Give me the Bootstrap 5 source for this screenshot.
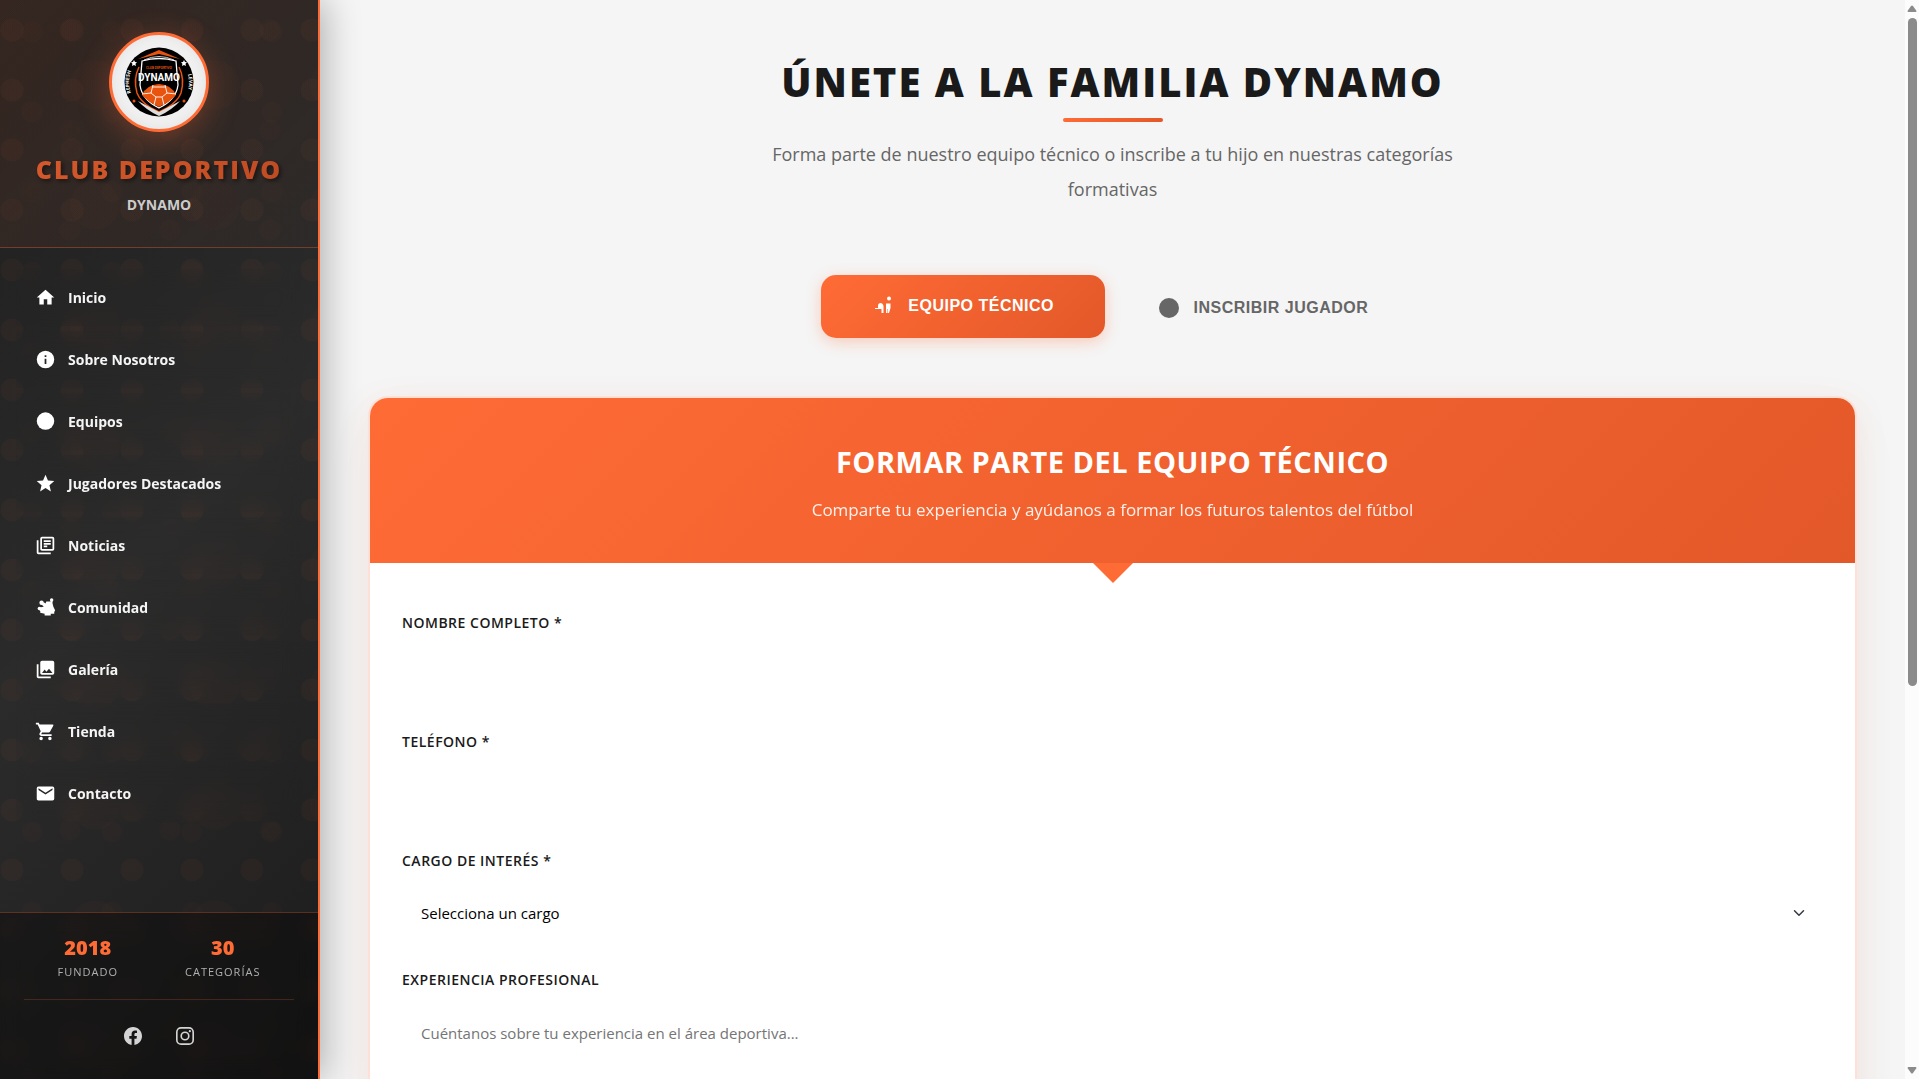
<!DOCTYPE html>
<html lang="es">
<head>
<meta charset="utf-8">
<meta name="viewport" content="width=device-width, initial-scale=1">
<title>Club Deportivo Dynamo</title>
<link href="https://cdn.jsdelivr.net/npm/bootstrap@5.3.0/dist/css/bootstrap.min.css" rel="stylesheet">
<style>
:root { --club: #ff6b35; --club-dark: #e55a2b; --club-grad: linear-gradient(135deg, #ff6b35, #e35829); }
body { font-family: "Open Sans", "Noto Sans", sans-serif; background: #f5f5f5; color: #1a1a1a; }
.app-side {
  width: 320px; z-index: 2; border-right: 2px solid var(--club);
  box-shadow: 4px 0 34px rgba(0,0,0,.3);
  background:
    radial-gradient(circle at 12px 30px, rgba(255,107,53,.035) 11px, transparent 12px) 0 0/60px 60px,
    radial-gradient(circle at 32px 32px, rgba(255,107,53,.02) 10px, transparent 11px) 0 0/80px 80px,
    radial-gradient(circle at 70px 30px, rgba(255,107,53,.02) 10px, transparent 11px) 0 0/100px 100px,
    radial-gradient(circle at 95px 85px, rgba(255,107,53,.02) 24px, transparent 25px) 0 0/120px 120px,
    linear-gradient(135deg, #1e1e1e 0%, #2b2b2b 50%, #1c1c1c 100%);
}
.side-head { padding: 32px 24px; height: 248px; border-bottom: 1px solid rgba(255,107,53,.3); background: linear-gradient(135deg, rgba(255,107,53,.1), rgba(255,107,53,.02)); }
.crest { width: 100px; height: 100px; border: 3px solid var(--club); background: #f0f0f0; box-shadow: 0 8px 32px rgba(255,107,53,.3), inset 0 0 12px rgba(0,0,0,.06); }
.crest svg { overflow: visible; }
.club-name { font-size: 25px; font-weight: 800; line-height: 36px; letter-spacing: 2px; margin-top: 19px; background: var(--club-grad); -webkit-background-clip: text; background-clip: text; color: transparent; filter: drop-shadow(2px 2px 2px rgba(0,0,0,.5)) brightness(.84); }
.club-sub { font-size: 14px; font-weight: 700; line-height: 24px; color: #ccc; margin-top: 6px; }
.side-nav { padding: 21px 16px 0; gap: 5px; }
.side-nav .nav-link { display: flex; align-items: center; gap: 12px; height: 57px; padding: 0 19px 1px; font-size: 14px; font-weight: 700; color: #f5f5f5; backdrop-filter: blur(10px); }
.side-nav svg { width: 21px; height: 21px; fill: #fff; }
.side-foot { height: 167px; padding: 16px 24px; border-top: 1px solid rgba(255,107,53,.3); background: rgba(0,0,0,.35); backdrop-filter: blur(10px); }
.stats { height: 71px; border-bottom: 1px solid rgba(255,107,53,.2); padding: 5px 0; }
.stat-num { font-size: 20px; line-height: 28px; font-weight: 800; color: var(--club); }
.stat-tag { font-size: 11px; line-height: 20px; font-weight: 500; color: #b0b0b0; letter-spacing: 1px; }
.social { gap: 34px; padding-top: 27px; }
.social svg { width: 18px; height: 18px; fill: #d4d4d4; display: block; }
.app-main { padding: 48px; min-width: 0; overflow: hidden; }
.page-title { font-size: 40px; line-height: 64px; font-weight: 800; letter-spacing: 2px; padding-top: 2px; margin: 0; }
.title-rule { width: 100px; height: 4px; border-radius: 2px; background: var(--club-grad); margin: 4px auto 0; }
.page-sub { max-width: 700px; font-size: 18px; line-height: 35px; color: #666; margin: 15px auto 0; }
.tabs { display: grid; grid-template-columns: 1fr 1fr; gap: 16px; width: max-content; margin: 70px auto 0; }
.tab-btn { height: 63px; padding: 0 36px 2px; border: 0; border-radius: 15px; background: none; color: #666; font: bold 16px/24px "Liberation Sans", Arial, sans-serif; letter-spacing: .5px; display: flex; align-items: center; justify-content: center; gap: 13px; }
.tab-btn svg { width: 24px; height: 24px; fill: currentColor; }
.tab-btn.active { background: var(--club-grad); color: #fff; transform: translateY(-2px); box-shadow: 0 4px 15px rgba(255,107,53,.3); }
.form-panel { margin-top: 56px; border: 2px solid #ffe0d6; border-radius: 20px; background: #fff; box-shadow: 0 20px 60px rgba(0,0,0,.03), 0 8px 32px rgba(255,107,53,.1); }
.panel-head { position: relative; height: 165px; padding-top: 40px; border-radius: 18px 18px 0 0; background: var(--club-grad); color: #fff; }
.panel-head::after { content: ""; position: absolute; top: 100%; left: 50%; margin-left: -20px; border: 20px solid transparent; border-top-color: var(--club); border-bottom: 0; }
.panel-head h2 { font-size: 29px; line-height: 48px; font-weight: 700; letter-spacing: .5px; margin: 0; }
.panel-head p { font-size: 17px; line-height: 28px; margin: 10px 0 0; opacity: .9; }
.panel-body { padding: 48px 32px; }
.field { margin-bottom: 29px; }
.field label { display: block; font-size: 14px; line-height: 24px; font-weight: 600; letter-spacing: .5px; color: #1a1a1a; margin-bottom: 13px; }
.field .form-control, .field .form-select { height: 53px; border: 0; padding: 0 19px; font-size: 15px; line-height: 24px; color: #000; background-color: transparent; }
.field .form-select { background-position: right 18px center; background-size: 12px; }
.field textarea.form-control { height: 120px; padding-top: 16px; resize: none; }
.field ::placeholder { color: #757575; }
.scroll-col { width: 14px; background: #fcfcfc; padding: 5px 0; }
.scroll-col i { width: 9px; height: 668px; border-radius: 5px; background: #8b8b8b; margin-top: 5px; }
.scroll-col svg { width: 10px; height: 8px; fill: #8b8b8b; }
</style>
</head>
<body>
<div class="d-flex vh-100 overflow-hidden">
  <aside class="app-side d-flex flex-column flex-shrink-0">
    <header class="side-head text-center">
      <div class="crest rounded-circle mx-auto d-flex align-items-center justify-content-center">
        <svg width="70" height="70" viewBox="0 0 70 70" role="img" aria-label="Escudo Dynamo">
          <defs><path id="arcL" d="M14 56A29 29 0 0 1 14 14"/><path id="arcR" d="M56 14A29 29 0 0 1 56 56"/></defs>
          <circle cx="35" cy="35" r="34.500"/>
          <path d="M14 12L35 3L56 12L35 7Z" fill="#e8530e"/>
          <path d="M20 13Q35 6 50 13" fill="none" stroke="#fff" stroke-width=".8"/>
          <path d="M15 20Q9 32 13 46Q16 54 27 61L35 65" fill="none" stroke="#e8530e" stroke-width="1.500"/>
          <path d="M55 20Q61 32 57 46Q54 54 43 61L35 65" fill="none" stroke="#e8530e" stroke-width="1.500"/>
          <path d="M18 14Q35 9 52 14L54 38Q52 53 35 61Q18 53 16 38Z" stroke="#fff" stroke-width="1.300"/>
          <path d="M14 54Q22 63 35 69Q48 63 56 54L35 65Z" fill="#ddd"/>
          <path d="M18 48Q22 38 35 37Q48 38 52 48Q46 55 35 60Q24 55 18 48Z" fill="#e8530e"/>
          <path d="M29 38L27 46L32 50L38 50L43 46L41 38M27 46L18 47M43 46L52 47M32 50L30 58M38 50L40 58M28 40H42" fill="none" stroke="#fff" stroke-width=".9"/>
          <text x="35" y="22" font-size="3" font-weight="700" text-anchor="middle" fill="#e8530e">CLUB DEPORTIVO</text>
          <text x="35" y="34" font-family="Roboto" font-size="10" font-weight="700" text-anchor="middle" fill="#fff">DYNAMO</text>
          <g font-size="5" font-weight="700" text-anchor="middle" fill="#fff"><text><textPath href="#arcL" startOffset="50%">REPHESH</textPath></text><text><textPath href="#arcR" startOffset="50%">LEVAY</textPath></text></g>
          <path d="M10 13l1 2 2 .3-1.500 1.400.4 2.200L10 18l-2 .9.400-2.200L7 15.300 9 15zM60 13l1 2 2 .3-1.500 1.400.4 2.200L60 18l-2 .9.400-2.200L57 15.300 59 15z" fill="#fff"/>
          <circle cx="10" cy="54" r="1.500" fill="#e8530e"/><circle cx="60" cy="54" r="1.500" fill="#e8530e"/>
        </svg>
      </div>
      <h1 class="club-name mb-0 text-nowrap">CLUB DEPORTIVO</h1>
      <p class="club-sub mb-0">DYNAMO</p>
    </header>
    <nav class="side-nav nav flex-column flex-nowrap">
      <a class="nav-link" href="#"><svg viewBox="0 0 24 24"><path d="M10 20v-6h4v6h5v-8h3L12 3 2 12h3v8z"/></svg>Inicio</a>
      <a class="nav-link" href="#"><svg viewBox="0 0 24 24"><path d="M12 2a10 10 0 1 0 0 20 10 10 0 0 0 0-20zm1 15h-2v-6h2zm0-8h-2V7h2z"/></svg>Sobre Nosotros</a>
      <a class="nav-link" href="#"><svg viewBox="0 0 24 24"><circle cx="12" cy="11.500" r="10"/></svg>Equipos</a>
      <a class="nav-link" href="#"><svg viewBox="0 0 24 24"><path d="M12 17.270L18.180 21l-1.640-7.030L22 9.240l-7.190-.61L12 2 9.190 8.630 2 9.240l5.460 4.730L5.820 21z"/></svg>Jugadores Destacados</a>
      <a class="nav-link" href="#"><svg viewBox="0 0 24 24"><path d="M4 6H2v14c0 1.100.9 2 2 2h14v-2H4zM20 2H8a2 2 0 0 0-2 2v12c0 1.100.9 2 2 2h12a2 2 0 0 0 2-2V4a2 2 0 0 0-2-2zm0 14H8V4h12zM10 9h8v2h-8zm0 3h4v2h-4zm0-6h8v2h-8z"/></svg>Noticias</a>
      <a class="nav-link" href="#"><svg viewBox="0 0 24 24"><circle cx="19" cy="3.500" r="2"/><circle cx="7.500" cy="6.500" r="2.500"/><circle cx="5" cy="13" r="2"/><path d="M5 12l5-1-3-3 3-2 2 1.500L13 5h5l2 2 1 4 2 4-1 2v2h-4v2h-7v-2l-5-1v-2l-2-2zM18 4h2v4h-2z"/></svg>Comunidad</a>
      <a class="nav-link" href="#"><svg viewBox="0 0 24 24"><path d="M22 16V4a2 2 0 0 0-2-2H8a2 2 0 0 0-2 2v12c0 1.100.9 2 2 2h12a2 2 0 0 0 2-2zm-11-4l2.030 2.710L16 11l4 5H8zM2 6v14c0 1.100.9 2 2 2h14v-2H4V6z"/></svg>Galería</a>
      <a class="nav-link" href="#"><svg viewBox="0 0 24 24"><path d="M7 18a2 2 0 1 0 0 4 2 2 0 0 0 0-4zM1 2v2h2l3.600 7.590-1.350 2.450C4.520 15.370 5.480 17 7 17h12v-2H7.420a.25.25 0 0 1-.25-.25l.93-1.750h7.450c.75 0 1.410-.41 1.750-1.030l3.580-6.490A1 1 0 0 0 20 4H5.210l-.94-2zm16 16a2 2 0 1 0 0 4 2 2 0 0 0 0-4z"/></svg>Tienda</a>
      <a class="nav-link" href="#"><svg viewBox="0 0 24 24"><path d="M20 4H4a2 2 0 0 0-2 2v12c0 1.100.9 2 2 2h16a2 2 0 0 0 2-2V6a2 2 0 0 0-2-2zm0 4l-8 5-8-5V6l8 5 8-5z"/></svg>Contacto</a>
    </nav>
    <footer class="side-foot mt-auto">
      <div class="stats d-flex justify-content-around text-center">
        <div><div class="stat-num">2018</div><div class="stat-tag">FUNDADO</div></div>
        <div><div class="stat-num">30</div><div class="stat-tag">CATEGORÍAS</div></div>
      </div>
      <div class="social d-flex justify-content-center">
        <a href="#" aria-label="Facebook"><svg viewBox="0 0 16 16"><path d="M16 8.049c0-4.446-3.582-8.050-8-8.050C3.580 0-.002 3.603-.002 8.050c0 4.017 2.926 7.347 6.750 7.951v-5.625h-2.030V8.050H6.750V6.275c0-2.017 1.195-3.131 3.022-3.131.876 0 1.791.157 1.791.157v1.980h-1.009c-.993 0-1.303.621-1.303 1.258v1.510h2.218l-.354 2.326H9.250V16c3.824-.604 6.750-3.934 6.750-7.951z"/></svg></a>
        <a href="#" aria-label="Instagram"><svg viewBox="0 0 16 16"><path fill-rule="evenodd" d="M4.500 0h7A4.500 4.500 0 0 1 16 4.500v7a4.500 4.500 0 0 1-4.500 4.500h-7A4.500 4.500 0 0 1 0 11.500v-7A4.500 4.500 0 0 1 4.500 0zm0 1.450A3.050 3.050 0 0 0 1.450 4.500v7a3.050 3.050 0 0 0 3.050 3.050h7a3.050 3.050 0 0 0 3.050-3.050v-7a3.050 3.050 0 0 0-3.050-3.050zM8 3.900a4.100 4.100 0 1 1 0 8.200 4.100 4.100 0 0 1 0-8.200zm0 1.450a2.650 2.650 0 1 0 0 5.300 2.650 2.650 0 0 0 0-5.300z"/><circle cx="12.300" cy="3.700" r="1"/></svg></a>
      </div>
    </footer>
  </aside>

  <main class="app-main flex-grow-1">
    <div class="text-center">
      <h1 class="page-title">ÚNETE A LA FAMILIA DYNAMO</h1>
      <div class="title-rule"></div>
      <p class="page-sub">Forma parte de nuestro equipo técnico o inscribe a tu hijo en nuestras categorías formativas</p>
    </div>
    <div class="tabs">
      <button type="button" class="tab-btn active"><svg viewBox="0 0 24 24"><circle cx="18" cy="4.500" r="2"/><path d="M4 14h3v-2c0-2 1-3 2.500-3s2.500 1 3 3v7h-2v-4H4zM15 19v-9.500h4.500V14l-1.500 5h-1v-4h-.5v4z"/></svg>EQUIPO TÉCNICO</button>
      <button type="button" class="tab-btn"><svg viewBox="0 0 24 24"><circle cx="12" cy="12" r="10"/></svg>INSCRIBIR JUGADOR</button>
    </div>
    <section class="form-panel">
      <header class="panel-head text-center">
        <h2>FORMAR PARTE DEL EQUIPO TÉCNICO</h2>
        <p>Comparte tu experiencia y ayúdanos a formar los futuros talentos del fútbol</p>
      </header>
      <form class="panel-body">
        <div class="field"><label for="nombre">NOMBRE COMPLETO *</label><input class="form-control" id="nombre" type="text"></div>
        <div class="field"><label for="telefono">TELÉFONO *</label><input class="form-control" id="telefono" type="tel"></div>
        <div class="field"><label for="cargo">CARGO DE INTERÉS *</label><select class="form-select" id="cargo"><option>Selecciona un cargo</option></select></div>
        <div class="field"><label for="exp">EXPERIENCIA PROFESIONAL</label><textarea class="form-control" id="exp" placeholder="Cuéntanos sobre tu experiencia en el área deportiva..."></textarea></div>
      </form>
    </section>
  </main>
  <div class="scroll-col d-flex flex-column align-items-center flex-shrink-0" aria-hidden="true">
    <svg viewBox="0 0 10 8"><path d="M4 1Q5 0 6 1L9.500 6Q9.500 7 8.500 7H1.500Q.5 7 .5 6Z"/></svg>
    <i></i>
    <svg class="mt-auto" viewBox="0 0 10 8"><path d="M4 7Q5 8 6 7L9.500 2Q9.500 1 8.500 1H1.500Q.5 1 .5 2Z"/></svg>
  </div>
</div>
<script src="https://cdn.jsdelivr.net/npm/bootstrap@5.3.0/dist/js/bootstrap.bundle.min.js"></script>
</body>
</html>
